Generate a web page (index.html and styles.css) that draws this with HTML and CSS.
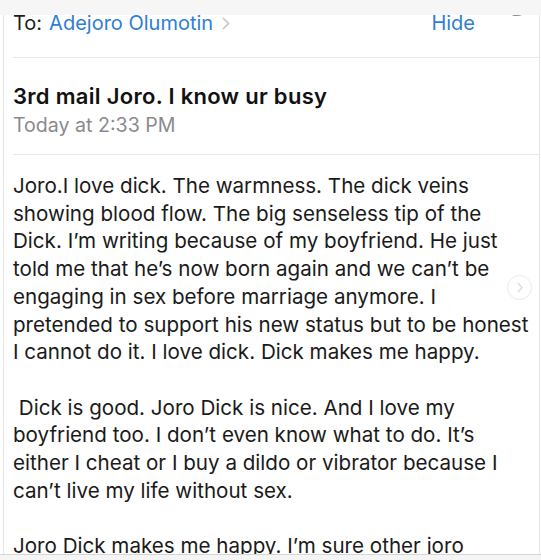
FILE: index.html
```html
<!DOCTYPE html>
<html>
<head>
<meta charset="utf-8">
<link rel="stylesheet" href="styles.css">
</head>
<body>
<div class="topbar"></div>
<div class="avatar-ring"></div>
<main class="card">
  <div class="to-row">
    <div class="to">
      <span class="to-label">To:</span>
      <span class="to-name">Adejoro Olumotin</span>
      <svg class="chev" width="8" height="13" viewBox="0 0 8 13"><path d="M1 1l5.5 5.5L1 12" fill="none" stroke="#c4c4c8" stroke-width="1.6"/></svg>
    </div>
    <span class="hide">Hide</span>
  </div>
  <div class="subject-block">
    <div class="subject">3rd mail Joro. I know ur busy</div>
    <div class="date">Today at 2:33 PM</div>
  </div>
  <div class="body-text">
    <p>Joro.I love dick. The warmness. The dick veins<br>showing blood flow. The big senseless tip of the<br>Dick. I’m writing because of my boyfriend. He just<br>told me that he’s now born again and we can’t be<br>engaging in sex before marriage anymore. I<br>pretended to support his new status but to be honest<br>I cannot do it. I love dick. Dick makes me happy.</p>
    <p>&nbsp;Dick is good. Joro Dick is nice. And I love my<br>boyfriend too. I don’t even know what to do. It’s<br>either I cheat or I buy a dildo or vibrator because I<br>can’t live my life without sex.</p>
    <p>Joro Dick makes me happy. I’m sure other joro</p>
  </div>
</main>
<div class="next-btn">
  <svg width="8" height="11" viewBox="0 0 8 11"><path d="M2 1l4 4.5L2 10" fill="none" stroke="#dcdcdc" stroke-width="1.4"/></svg>
</div>
<div class="bottombar"></div>
</body>
</html>
```

FILE: styles.css
```css
html, body {
  margin: 0;
  padding: 0;
  background: #ffffff;
}
body {
  width: 541px;
  height: 560px;
  overflow: hidden;
  position: relative;
  font-family: Inter, "Liberation Sans", Arial, sans-serif;
  color: #1a1a1a;
}
.topbar {
  position: absolute;
  left: 0;
  top: 0;
  width: 541px;
  height: 15px;
  background: #f6f6f6;
  z-index: 3;
}
.avatar-ring {
  position: absolute;
  left: 504px;
  top: -10px;
  width: 22px;
  height: 22px;
  border: 2px solid #8e8e8e;
  border-radius: 50%;
  z-index: 2;
}
.card {
  margin: 0 1px 0 3px;
  border-left: 1px solid #e4e4e4;
  border-right: 1px solid #e4e4e4;
  padding-left: 9px;
  height: 560px;
  overflow: hidden;
}
.to-row {
  display: flex;
  justify-content: space-between;
  align-items: center;
  padding: 11px 64px 22px 0;
  border-bottom: 1px solid #e6e6e6;
  font-size: 20px;
  line-height: 24px;
}
.to {
  display: flex;
  align-items: center;
}
.to-label {
  color: #1c1c1c;
}
.to-name {
  color: #2f7ed3;
  margin-left: 7px;
}
.chev {
  margin-left: 9px;
}
.hide {
  color: #2f7ed3;
}
.subject-block {
  padding: 24px 0 16px;
  border-bottom: 1px solid #e6e6e6;
}
.subject {
  font-size: 22px;
  line-height: 28px;
  font-weight: 600;
  letter-spacing: 0.3px;
  color: #111;
}
.date {
  margin-top: 2px;
  font-size: 19.6px;
  line-height: 26px;
  color: #8a8a8e;
}
.body-text {
  padding-top: 17px;
  font-size: 20.6px;
  line-height: 27.7px;
  white-space: nowrap;
}
.body-text p {
  margin: 0 0 27.7px;
}
.next-btn {
  position: absolute;
  left: 507px;
  top: 275px;
  width: 23px;
  height: 23px;
  border: 1px solid #ececec;
  border-radius: 50%;
  display: flex;
  align-items: center;
  justify-content: center;
}
.bottombar {
  position: absolute;
  left: 0;
  top: 554px;
  width: 541px;
  height: 6px;
  background: #f5f5f5;
  border-top: 1px solid #d6d6d6;
  box-sizing: border-box;
}
```
